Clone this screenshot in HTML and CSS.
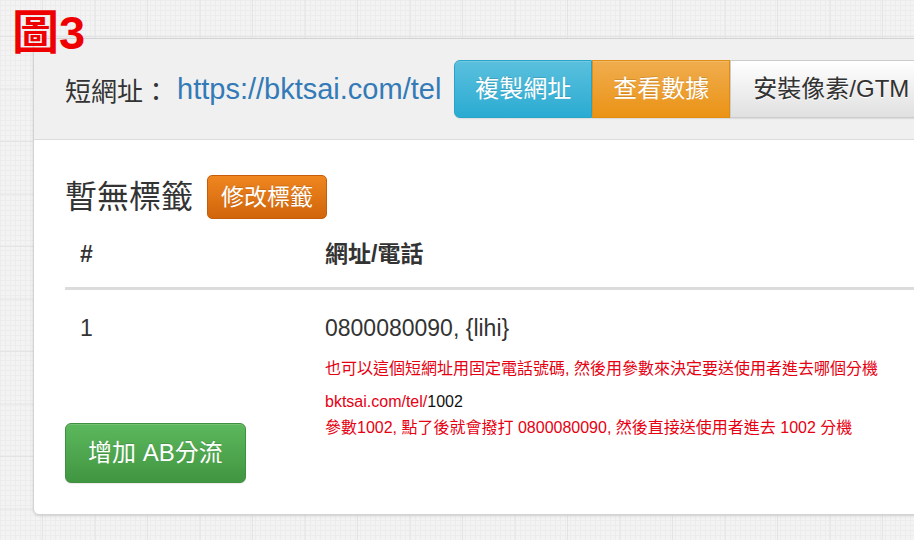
FILE: index.html
```html
<!DOCTYPE html>
<html lang="zh-Hant">
<head>
    <meta charset="UTF-8">
    <meta name="viewport" content="width=device-width, initial-scale=1.0">
    <title>短網址 - 電話轉接</title>
    <link rel="stylesheet" href="styles.css">
</head>
<body>
    <!-- Figure label -->
    <div class="fig-label">圖3</div>

    <div class="panel">
        <!-- Short URL header -->
        <div class="panel-heading">
            <span class="url-label">短網址：</span>
            <a class="short-url" href="#">https://bktsai.com/tel</a>
            <div class="btn-group">
                <button class="btn btn-info">複製網址</button>
                <button class="btn btn-warning">查看數據</button>
                <button class="btn btn-default">安裝像素/GTM</button>
            </div>
        </div>

        <!-- Targets -->
        <div class="panel-body">
            <h3 class="tags-title">暫無標籤 <span class="btn-tag">修改標籤</span></h3>

            <table class="targets">
                <thead>
                    <tr>
                        <th class="col-num">#</th>
                        <th>網址/電話</th>
                    </tr>
                </thead>
                <tbody>
                    <tr>
                        <td>1</td>
                        <td>
                            <div class="target">
                                0800080090, {lihi}
                                <div class="note">
                                    <p class="note-first">也可以這個短網址用固定電話號碼, 然後用參數來決定要送使用者進去哪個分機</p>
                                    <p>bktsai.com/tel/<span class="note-param">1002</span><br>參數1002, 點了後就會撥打 0800080090, 然後直接送使用者進去 1002 分機</p>
                                </div>
                            </div>
                        </td>
                    </tr>
                </tbody>
            </table>

            <button class="btn btn-success">增加 AB分流</button>
        </div>
    </div>
</body>
</html>
```

FILE: styles.css
```css
/* Reset */
* {
    box-sizing: border-box;
    margin: 0;
    padding: 0;
}

/* Page with grid paper background */
body {
    font-family: "Liberation Sans", "Noto Sans CJK TC", sans-serif;
    color: #333;
    overflow: hidden;
    height: 540px;
    padding: 38px 0 0 33px;
    background-color: #f3f3f3;
    background-image:
        linear-gradient(90deg, #e4e4e4 1px, transparent 1px),
        linear-gradient(#e4e4e4 1px, transparent 1px),
        linear-gradient(90deg, #ececec 1px, transparent 1px),
        linear-gradient(#ececec 1px, transparent 1px);
    background-size: 52.5px 52.5px, 52.5px 52.5px, 5px 5px, 5px 5px;
    background-position: 42px 36px, 42px 36px, 0 0, 0 0;
}

/* Red figure label */
.fig-label {
    position: absolute;
    top: 3px;
    left: 12px;
    font-size: 47px;
    font-weight: bold;
    line-height: 60px;
    color: #ee0000;
    z-index: 2;
}

/* Panel */
.panel {
    width: 1000px;
    background: #fff;
    border: 1px solid #d3d3d3;
    border-radius: 6px;
    box-shadow: 0 1px 3px rgba(0, 0, 0, 0.12);
}

.panel-heading {
    display: flex;
    align-items: center;
    padding: 21px 31px;
    background-color: #f0f0f0;
    border-bottom: 1px solid #dcdcdc;
    border-radius: 6px 6px 0 0;
}

.url-label {
    font-size: 26px;
}

.short-url {
    margin-left: 8px;
    font-size: 29px;
    color: #337ab7;
    text-decoration: none;
}

/* Buttons */
.btn {
    display: inline-block;
    font-family: inherit;
    font-size: 24px;
    line-height: 34px;
    padding: 11px 20px;
    border: 1px solid transparent;
    border-radius: 6px;
    cursor: pointer;
    color: #fff;
    text-shadow: 0 -1px 0 rgba(0, 0, 0, 0.15);
    box-shadow: inset 0 1px 0 rgba(255, 255, 255, 0.15), 0 1px 1px rgba(0, 0, 0, 0.08);
}

.btn-group {
    display: flex;
    margin-left: 13px;
}

.btn-group .btn {
    border-radius: 0;
}

.btn-group .btn:first-child {
    border-radius: 6px 0 0 6px;
}

.btn-info {
    background-image: linear-gradient(#5bc0de, #2aabd2);
    border-color: #28a4c9;
}

.btn-warning {
    background-image: linear-gradient(#f0ad4e, #eb9316);
    border-color: #e38d13;
}

.btn-default {
    color: #333;
    text-shadow: 0 1px 0 #fff;
    background-image: linear-gradient(#fff, #e0e0e0);
    border-color: #ccc;
    padding-left: 22px;
}

.btn-success {
    background-image: linear-gradient(#5cb85c, #419641);
    border-color: #3e8f3e;
    padding: 12px 22px;
}

/* Body */
.panel-body {
    padding: 35px 31px 31px;
}

.tags-title {
    display: flex;
    align-items: center;
    font-size: 32px;
    font-weight: normal;
    line-height: 44px;
}

.btn-tag {
    margin-left: 14px;
    padding: 0 13px;
    font-size: 23px;
    line-height: 42px;
    color: #fff;
    border-radius: 5px;
    border: 1px solid #c65d0a;
    background-image: linear-gradient(#f0861f, #d0650b);
    text-shadow: 0 -1px 0 rgba(0, 0, 0, 0.15);
}

/* Table */
.targets {
    width: 100%;
    border-collapse: collapse;
    margin-top: 18px;
    margin-bottom: 62px;
    font-size: 23px;
}

.targets th,
.targets td {
    text-align: left;
    vertical-align: top;
    line-height: 34px;
    padding: 16px 16px 16px 15px;
}

.targets th {
    font-weight: bold;
    border-bottom: 3px solid #dcdcdc;
    padding-top: 0;
}

.targets td {
    padding-top: 21px;
}

.col-num {
    width: 245px;
}

.target {
    position: relative;
}

/* Red annotation laid over the row */
.note {
    position: absolute;
    top: 45px;
    left: 0;
    width: 620px;
    font-size: 16px;
    line-height: 26px;
    color: #e60012;
}

.note-first {
    margin-bottom: 7px;
}

.note-param {
    color: #111;
}
```
